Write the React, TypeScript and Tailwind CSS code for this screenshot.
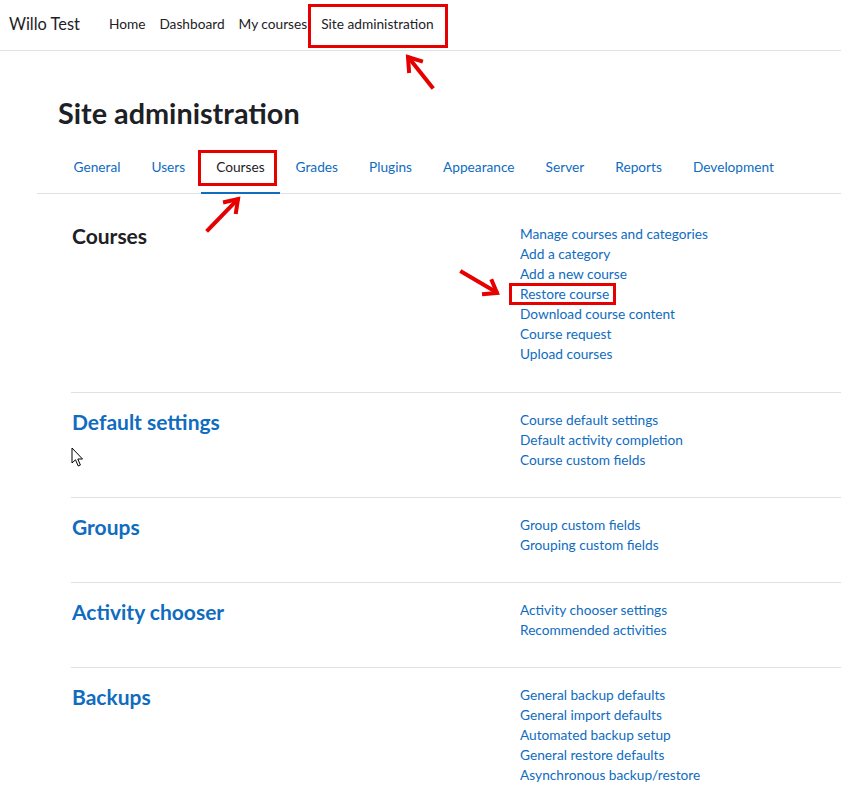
import React from "react";

const navLinks = ["Home", "Dashboard", "My courses", "Site administration"];
const tabs = ["General", "Users", "Courses", "Grades", "Plugins", "Appearance", "Server", "Reports", "Development"];

const sections = [
    {
        title: "Courses",
        plain: true,
        links: [
            "Manage courses and categories",
            "Add a category",
            "Add a new course",
            "Restore course",
            "Download course content",
            "Course request",
            "Upload courses",
        ],
    },
    {
        title: "Default settings",
        links: ["Course default settings", "Default activity completion", "Course custom fields"],
    },
    {
        title: "Groups",
        links: ["Group custom fields", "Grouping custom fields"],
    },
    {
        title: "Activity chooser",
        links: ["Activity chooser settings", "Recommended activities"],
    },
    {
        title: "Backups",
        links: [
            "General backup defaults",
            "General import defaults",
            "Automated backup setup",
            "General restore defaults",
            "Asynchronous backup/restore",
        ],
    },
];

function Annotations() {
    return (
        <>
            {/* red highlight boxes */}
            <div className="absolute left-[308px] top-[4px] w-[140px] h-[44px] border-[3px] border-[#e60000]" />
            <div className="absolute left-[198px] top-[150px] w-[79px] h-[36px] border-[3px] border-[#e60000]" />
            <div className="absolute left-[509px] top-[283px] w-[107px] h-[22px] border-[3px] border-[#e60000]" />
            {/* arrows */}
            <svg className="absolute left-0 top-0 pointer-events-none" width="841" height="802" viewBox="0 0 841 802">
                <g fill="none" stroke="#e60000" strokeWidth="4" strokeLinecap="square" strokeLinejoin="miter">
                    <path d="M432 87 L409 58" />
                    <path d="M409 71 L408 57 L421 61" />
                    <path d="M208 230 L237 200" />
                    <path d="M225 202 L238 199 L236 212" />
                    <path d="M462 272 L496 292" />
                    <path d="M492 281 L497 293 L484 294" />
                </g>
            </svg>
            {/* mouse pointer */}
            <svg className="absolute left-[71px] top-[447px]" width="14" height="21" viewBox="0 0 14 21">
                <path
                    d="M1 1 L1 16 L4.5 12.8 L7.2 19 L9.4 18 L6.8 12 L11.5 12 Z"
                    fill="#fff"
                    stroke="#000"
                    strokeWidth="1"
                    strokeLinejoin="round"
                />
            </svg>
        </>
    );
}

export default function App() {
    return (
        <div
            className="relative min-h-screen w-[841px] overflow-hidden bg-white text-[#1d2125]"
            style={{ fontFamily: "Lato, 'Segoe UI', 'Liberation Sans', sans-serif" }}
        >
            {/* Top navbar */}
            <header className="h-[51px] border-b border-[#dee2e6] flex items-center">
                <span className="ml-[9px] text-[16.4px] leading-none -mt-[2px]">Willo Test</span>
                <nav className="ml-[29px] flex gap-[14px] text-[13.7px] -mt-[2px]">
                    {navLinks.map((l) => (
                        <a key={l} className="text-[#1d2125]">{l}</a>
                    ))}
                </nav>
            </header>

            {/* Page header */}
            <h1 className="ml-[58px] mt-[46px] text-[28.8px] leading-[32px] font-bold">Site administration</h1>

            {/* Tabs */}
            <ul className="ml-[37px] mt-[19px] pl-[21px] flex border-b border-[#dee2e6]">
                {tabs.map((t) => (
                    <li key={t} className="-mb-px">
                        <a
                            className={
                                "block px-[15.5px] pt-[9px] pb-[15px] text-[13.7px] leading-[20px] text-[#0f6cbf] border-b-2 " +
                                (t === "Courses" ? "border-[#0f6cbf] text-[#1d2125]" : "border-transparent")
                            }
                        >
                            {t}
                        </a>
                    </li>
                ))}
            </ul>

            {/* Sections */}
            <div className="ml-[71px] mt-[30px]">
                {sections.map((s, i) => (
                    <div
                        key={s.title}
                        className={
                            "flex " +
                            (i === 0 ? "pt-0 pb-[28px] " : "pt-[17px] pb-[27px] ") +
                            (i < sections.length - 1 ? "border-b border-[#dee2e6]" : "")
                        }
                    >
                        <div className="w-[449px] shrink-0 pl-[1px]">
                            <h2
                                className={
                                    "text-[21px] leading-[24px] font-bold " +
                                    (s.plain ? "text-[#1d2125]" : "text-[#0f6cbf]")
                                }
                            >
                                {s.title}
                            </h2>
                        </div>
                        <ul className="text-[13.7px] leading-[20px] text-[#0f6cbf]">
                            {s.links.map((l) => (
                                <li key={l}>
                                    <a>{l}</a>
                                </li>
                            ))}
                        </ul>
                    </div>
                ))}
            </div>

            <Annotations />
        </div>
    );
}
